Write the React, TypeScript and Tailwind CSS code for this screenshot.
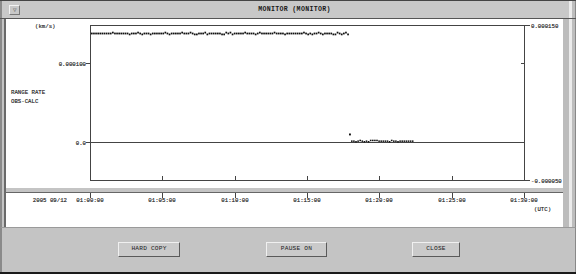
import React from "react";

const MONO = "'Liberation Mono', 'DejaVu Sans Mono', monospace";

function rnd(i: number) {
  const s = Math.sin(i * 12.9898 + 78.233) * 43758.5453;
  return s - Math.floor(s);
}

function Chart() {
  const L = 84, R = 518, T = 6, B = 161, Z = 123;
  const topDots: { x: number; y: number }[] = [];
  for (let x = 85, i = 0; x <= 342; x += 2.1, i++) {
    const r = rnd(i);
    topDots.push({ x, y: 13.6 + (r < 0.15 ? -0.9 : r > 0.88 ? 0.9 : 0) });
  }
  const lowDots: { x: number; y: number }[] = [];
  for (let x = 345, i = 0; x <= 406; x += 2.1, i++) {
    const r = rnd(i + 200);
    lowDots.push({ x, y: 121.4 + (r < 0.2 ? -0.7 : r > 0.85 ? 0.6 : 0) });
  }
  const ticks = [1, 2, 3, 4, 5].map((i) => L + ((R - L) / 6) * i);
  const stroke = "#444";
  const txt = { fontFamily: MONO, fontSize: 5.7, fill: "#1e1e1e", stroke: "#1e1e1e", strokeWidth: 0.15 } as const;
  return (
    <svg width="557" height="169" viewBox="0 0 557 169" className="block">
      <rect x={L} y={T} width={R - L} height={B - T} fill="none" stroke={stroke} strokeWidth="1" shapeRendering="crispEdges" />
      <line x1={L} y1={Z + 0.5} x2={R} y2={Z + 0.5} stroke={stroke} strokeWidth="1" shapeRendering="crispEdges" />
      <line x1={80} y1={44.5} x2={L} y2={44.5} stroke={stroke} shapeRendering="crispEdges" />
      <line x1={80} y1={Z + 0.5} x2={L} y2={Z + 0.5} stroke={stroke} shapeRendering="crispEdges" />
      <line x1={R} y1={T + 0.5} x2={R + 6} y2={T + 0.5} stroke={stroke} shapeRendering="crispEdges" />
      <line x1={R - 3} y1={44.5} x2={R} y2={44.5} stroke={stroke} shapeRendering="crispEdges" />
      <line x1={R} y1={B + 0.5} x2={R + 6} y2={B + 0.5} stroke={stroke} shapeRendering="crispEdges" />
      {ticks.map((x) => (
        <line key={x} x1={Math.round(x) + 0.5} y1={B - 4} x2={Math.round(x) + 0.5} y2={B} stroke={stroke} shapeRendering="crispEdges" />
      ))}
      {topDots.map((d, i) => (
        <rect key={i} x={d.x} y={d.y} width="1.7" height="1.8" fill="#111" />
      ))}
      <rect x={343} y={114.5} width="1.9" height="1.9" fill="#111" />
      {lowDots.map((d, i) => (
        <rect key={"l" + i} x={d.x} y={d.y} width="1.6" height="1.5" fill="#111" />
      ))}
      <text x={29} y={7} dominantBaseline="middle" style={txt}>(km/s)</text>
      <text x={80} y={45} textAnchor="end" dominantBaseline="middle" style={txt}>0.000100</text>
      <text x={80} y={124} textAnchor="end" dominantBaseline="middle" style={txt}>0.0</text>
      <text x={5} y={73} dominantBaseline="middle" style={txt}>RANGE RATE</text>
      <text x={5} y={82} dominantBaseline="middle" style={txt}>OBS-CALC</text>
      <text x={525} y={7} dominantBaseline="middle" style={txt}>0.000150</text>
      <text x={525} y={162} dominantBaseline="middle" style={txt}>-0.000050</text>
    </svg>
  );
}

function TimeAxis() {
  const L = 84, R = 518;
  const labels = ["01:00:00", "01:05:00", "01:10:00", "01:15:00", "01:20:00", "01:25:00", "01:30:00"];
  const txt = { fontFamily: MONO, fontSize: 5.7, fill: "#1e1e1e", stroke: "#1e1e1e", strokeWidth: 0.15 } as const;
  return (
    <svg width="557" height="34" viewBox="0 0 557 34" className="block">
      {labels.map((l, i) => {
        const x = Math.round(L + ((R - L) / 6) * i);
        return (
          <g key={l}>
            <text x={x} y={7} textAnchor="middle" dominantBaseline="middle" style={txt}>{l}</text>
            <line x1={x + 0.5} y1={0} x2={x + 0.5} y2={5} stroke="#444" shapeRendering="crispEdges" />
          </g>
        );
      })}
      <text x={61} y={7} textAnchor="end" dominantBaseline="middle" style={txt}>2005 09/12</text>
      <text x={528} y={16} dominantBaseline="middle" style={txt}>(UTC)</text>
    </svg>
  );
}

function Btn({ label, w, ml }: { label: string; w: string; ml: string }) {
  return (
    <button
      className={`${w} ${ml} h-[15px] bg-[#cacaca] border border-t-[#f0f0f0] border-l-[#f0f0f0] border-r-[#5a5a5a] border-b-[#5a5a5a] text-[6.2px] leading-none text-[#222] tracking-[0.2px]`}
      style={{ fontFamily: MONO }}
    >
      {label}
    </button>
  );
}

export default function App() {
  return (
    <div className="w-[576px] h-[274px] bg-[#c4c4c4] flex flex-col overflow-hidden border-t border-t-[#444] border-b-2 border-b-[#1a1a1a]">
      <div className="h-[18px] flex shrink-0 border-b border-b-[#555]">
        <div className="w-[569px] flex items-center bg-[#c8c8c8] border-l-2 border-l-[#8a8a8a]">
          <div className="ml-[7px] w-[11px] h-[10px] border border-t-[#f2f2f2] border-l-[#f2f2f2] border-r-[#777] border-b-[#777] flex items-center justify-center text-[7px] leading-none text-[#555]">▿</div>
          <div className="flex-1 text-center text-[6.6px] font-bold tracking-[0.3px] text-[#1a1a1a]" style={{ fontFamily: MONO }}>
            MONITOR (MONITOR)
          </div>
        </div>
        <div className="w-[7px] flex">
          <div className="w-[3px] bg-[#ececec]" />
          <div className="flex-1 bg-[#bdbdbd] border-r border-r-[#888]" />
        </div>
      </div>
      <div className="flex shrink-0">
        <div className="w-[6px] flex">
          <div className="w-[4px] bg-[#c4c4c4] border-l-2 border-l-[#8a8a8a]" />
          <div className="w-[2px] bg-[#6a6a6a]" />
        </div>
        <div className="w-[557px] flex flex-col">
          <div className="h-[169px] bg-white">
            <Chart />
          </div>
          <div className="h-[5px] bg-[#c4c4c4] border-b border-b-[#666]" />
          <div className="h-[34px] bg-white">
            <TimeAxis />
          </div>
        </div>
        <div className="w-[13px] flex">
          <div className="w-[6px] bg-[#bcbcbc]" />
          <div className="w-[3px] bg-[#ebebeb]" />
          <div className="flex-1 bg-[#bdbdbd] border-r border-r-[#888]" />
        </div>
      </div>
      <div className="flex-1 flex items-start pt-[14px] border-t border-t-[#9a9a9a] border-l-2 border-l-[#8a8a8a] border-r border-r-[#888]">
        <Btn label="HARD COPY" w="w-[62px]" ml="ml-[116px]" />
        <Btn label="PAUSE ON" w="w-[61px]" ml="ml-[86px]" />
        <Btn label="CLOSE" w="w-[48px]" ml="ml-[85px]" />
      </div>
    </div>
  );
}
